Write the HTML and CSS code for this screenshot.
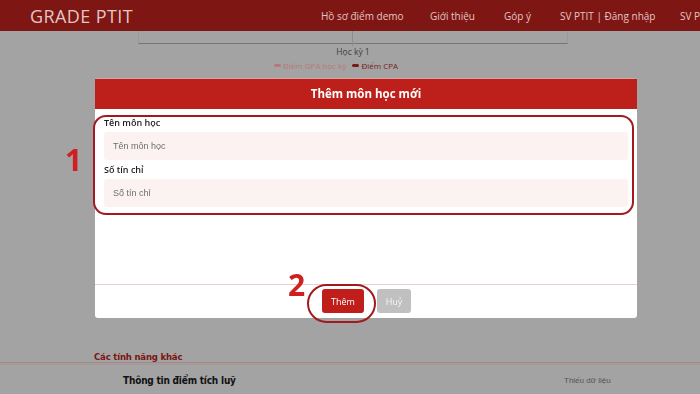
FILE: index.html
```html
<!DOCTYPE html>
<html>
<head>
<title>Grade PTIT</title>
<link rel="stylesheet" href="styles.css">
</head>
<body>

<div class="topbar">
    <div class="brand">GRADE PTIT</div>
    <nav class="nav">
        <a href="#">Hồ sơ điểm demo</a>
        <a href="#">Giới thiệu</a>
        <a href="#">Góp ý</a>
        <a href="#">SV PTIT | Đăng nhập</a>
        <a href="#">SV PTIT | Đăng ký</a>
    </nav>
</div>

<div class="chart">
    <div class="plot"></div>
    <div class="axis-label">Học kỳ 1</div>
    <div class="legend">
        <span class="legend-item gpa"><i></i>Điểm GPA học kỳ</span>
        <span class="legend-item cpa"><i></i>Điểm CPA</span>
    </div>
</div>

<div class="features">
    <h3>Các tính năng khác</h3>
    <div class="feature-row">
        <span class="feature-name">Thông tin điểm tích luỹ</span>
        <span class="feature-status">Thiếu dữ liệu</span>
    </div>
</div>

<!-- Add subject dialog -->
<div class="modal">
    <div class="modal-header">Thêm môn học mới</div>
    <div class="modal-body">
        <label for="subjectName">Tên môn học</label>
        <input type="text" id="subjectName" placeholder="Tên môn học">

        <label for="credits">Số tín chỉ</label>
        <input type="text" id="credits" placeholder="Số tín chỉ">
    </div>
    <div class="modal-footer">
        <button class="btn-add">Thêm</button>
        <button class="btn-cancel">Huỷ</button>
    </div>

    <div class="mark mark-fields"></div>
    <div class="mark-num num-1">1</div>
    <div class="mark mark-button"></div>
    <div class="mark-num num-2">2</div>
</div>

</body>
</html>
```

FILE: styles.css
```css
/* Page as seen behind the dialog backdrop */
body {
    margin: 0;
    background: #a3a3a3;
    font-family: "Open Sans", sans-serif;
    overflow: hidden;
}

.topbar {
    display: flex;
    align-items: center;
    height: 31px;
    padding-left: 30px;
    background: #7e1613;
    white-space: nowrap;
    overflow: hidden;
}

.brand {
    width: 291px;
    flex-shrink: 0;
    font-size: 18px;
    color: #e4c6c3;
    letter-spacing: 0.4px;
}

.nav {
    display: flex;
    gap: 30px;
}

.nav a {
    font-size: 10px;
    color: #e4c6c3;
    text-decoration: none;
}

.nav a:nth-child(1) { width: 79px; }
.nav a:nth-child(2) { width: 44px; }
.nav a:nth-child(3) { width: 26px; }
.nav a:nth-child(4) { width: 90px; }

.chart {
    height: 40px;
}

.plot {
    position: relative;
    margin-left: 138px;
    width: 428px;
    height: 12px;
    border-left: 1px solid #9a9a9a;
    border-right: 1px solid #9a9a9a;
    border-bottom: 1px solid #767676;
}

.plot::after {
    content: "";
    position: absolute;
    left: 213px;
    top: 0;
    height: 15px;
    border-left: 1px solid #8e8e8e;
}

.axis-label {
    margin-left: 138px;
    width: 430px;
    margin-top: 2px;
    text-align: center;
    font-size: 8.5px;
    color: #3e3e3e;
}

.legend {
    display: flex;
    gap: 6px;
    margin-left: 274px;
    margin-top: 3px;
    font-size: 8px;
}

.legend-item {
    display: flex;
    align-items: center;
    gap: 2px;
}

.legend-item i {
    display: inline-block;
    width: 7px;
    height: 3px;
    border-radius: 2px;
}

.gpa { color: #b97876; }
.gpa i { background: #b97876; }
.cpa { color: #781a17; }
.cpa i { background: #781a17; }

.features {
    margin-top: 281px;
}

.features h3 {
    margin: 0;
    padding-left: 94px;
    font-family: "DejaVu Sans Condensed", "Liberation Sans Narrow", sans-serif;
    font-size: 9.5px;
    line-height: 10px;
    letter-spacing: -0.2px;
    color: #7b1512;
    border-bottom: 1px solid #9d8c8c;
    box-shadow: 0 2px 0 #a99a9a;
}

.feature-row {
    display: flex;
    align-items: center;
    height: 34px;
    padding-left: 123px;
}

.feature-name {
    width: 441px;
    font-family: "DejaVu Sans Condensed", "Liberation Sans Narrow", sans-serif;
    font-weight: bold;
    font-size: 10px;
    letter-spacing: -0.2px;
    color: #111;
}

.feature-status {
    font-family: "Liberation Sans Narrow", sans-serif;
    font-size: 8px;
    color: #555;
}

/* Dialog */
.modal {
    position: fixed;
    top: 79px;
    left: 95px;
    width: 542px;
    background: #fff;
    border-radius: 3px;
    box-shadow: 0 -1px 0 #d9a3a0;
}

.modal-header {
    height: 30px;
    line-height: 30px;
    background: #bd1f1a;
    color: #fff;
    text-align: center;
    font-weight: bold;
    font-size: 11.5px;
}

.modal-body {
    height: 175px;
    box-sizing: border-box;
    padding: 9px 9px 0;
}

.modal-body label {
    display: block;
    margin: 0 0 4px;
    font-size: 9px;
    line-height: 10px;
    font-weight: 600;
    color: #1d1d1d;
}

.modal-body input {
    display: block;
    width: 100%;
    height: 28px;
    box-sizing: border-box;
    margin: 0 0 5px;
    padding: 0 9px;
    border: none;
    border-radius: 3px;
    background: #fdf2f2;
    font-family: "Liberation Sans", Arial, sans-serif;
    font-size: 9px;
    outline: none;
}

.modal-body input::placeholder {
    color: #6e6e6e;
}

.modal-footer {
    display: flex;
    justify-content: center;
    gap: 13px;
    padding: 4px 0 5px;
    border-top: 1px solid #ebcfcf;
}

.modal-footer button {
    height: 24px;
    border: none;
    border-radius: 3px;
    font-family: "Open Sans", sans-serif;
    font-size: 9px;
    padding: 0;
}

.btn-add {
    width: 42px;
    margin-left: 1px;
    background: #bf1e1b;
    color: #fff;
}

.btn-cancel {
    width: 34px;
    background: #c0c0c0;
    color: #f4f4f4;
}

/* Tutorial markings drawn over the dialog */
.mark {
    position: absolute;
    border: 2px solid #a21a1d;
    box-sizing: border-box;
}

.mark-fields {
    left: -2px;
    top: 36px;
    width: 541px;
    height: 100px;
    border-radius: 13px;
}

.mark-button {
    left: 212px;
    top: 205px;
    width: 69px;
    height: 39px;
    border-radius: 20px;
}

.mark-num {
    position: absolute;
    font-family: "Open Sans", sans-serif;
    font-weight: bold;
    font-size: 30px;
    line-height: 30px;
    color: #d01f21;
}

.num-1 {
    left: -30px;
    top: 66px;
}

.num-2 {
    left: 193px;
    top: 191px;
}
```
